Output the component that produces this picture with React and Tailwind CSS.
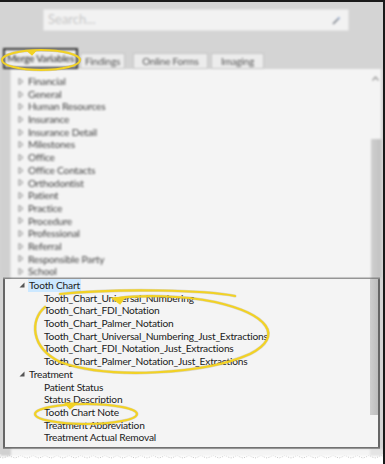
import React from "react";

const topItems = [
  "Financial",
  "General",
  "Human Resources",
  "Insurance",
  "Insurance Detail",
  "Milestones",
  "Office",
  "Office Contacts",
  "Orthodontist",
  "Patient",
  "Practice",
  "Procedure",
  "Professional",
  "Referral",
  "Responsible Party",
  "School",
];

const toothChart = [
  "Tooth_Chart_Universal_Numbering",
  "Tooth_Chart_FDI_Notation",
  "Tooth_Chart_Palmer_Notation",
  "Tooth_Chart_Universal_Numbering_Just_Extractions",
  "Tooth_Chart_FDI_Notation_Just_Extractions",
  "Tooth_Chart_Palmer_Notation_Just_Extractions",
];

const treatment = [
  "Patient Status",
  "Status Description",
  "Tooth Chart Note",
  "Treatment Abbreviation",
  "Treatment Actual Removal",
  "Treatment Description",
];

const Collapsed = () => (
  <svg width="6" height="7" viewBox="0 0 6 7" className="shrink-0">
    <path d="M1 0.5 L5 3.5 L1 6.5 Z" fill="none" stroke="#8a8a8a" strokeWidth="1" />
  </svg>
);

const Expanded = () => (
  <svg width="6" height="6" viewBox="0 0 6 6" className="shrink-0">
    <path d="M5.5 0.5 L5.5 5.5 L0.5 5.5 Z" fill="#555" />
  </svg>
);

// pad = distance from the list's left edge to the expander icon
const Row = ({ children, pad, child, icon, selected }) => (
  <div className="flex items-center h-[12.7px] whitespace-nowrap">
    <div className={pad} />
    {child ? <div className="w-[25px] shrink-0" /> : <div className="w-[10px] shrink-0 flex items-center">{icon}</div>}
    <span className={selected ? "bg-[#cce8ff] px-[1px] -ml-[1px] leading-[12.7px]" : "leading-[12.7px]"}>
      {children}
    </span>
  </div>
);

const Tab = ({ label, w }) => (
  <div
    className={`${w} h-[16px] bg-[#ececec] border border-[#c4c4c4] flex items-center justify-center text-[10px] text-[#555] mr-[3px] whitespace-nowrap`}
  >
    {label}
  </div>
);

export default function App() {
  return (
    <div className="relative w-[385px] h-[464px] overflow-hidden bg-[#d4d4d4] border-t-2 border-r-2 border-[#1a1a1a] font-['Lato','Open_Sans',sans-serif] text-[10.2px] tracking-[-0.2px] text-[#222]">
      {/* blurred upper half */}
      <div className="blur-[0.8px] h-[275px] flex flex-col">
        <div className="pl-[43px] pt-[7px]">
          <div className="w-[306px] h-[22px] bg-[#f2f2f2] border border-[#e2e2e2] flex items-center justify-between pl-[4px] pr-[7px]">
            <span className="text-[13px] tracking-normal text-[#c8c8c8]">Search...</span>
            <svg width="9" height="9" viewBox="0 0 9 9">
              <path d="M1 8 L6 3" stroke="#7a7f8a" strokeWidth="1.6" />
              <path d="M6 3 L7.5 1.5" stroke="#8da3c8" strokeWidth="2" />
            </svg>
          </div>
        </div>
        <div className="flex items-end h-[21px] mt-[17px] pl-[3px]">
          <div className="w-[75px] h-[21px] bg-[#eeeeee] border-2 border-[#333] flex items-center justify-center text-[10px] text-[#222] mr-[2px] whitespace-nowrap">
            Merge Variables
          </div>
          <Tab label="Findings" w="w-[45px]" />
          <div className="w-[5px]" />
          <Tab label="Online Forms" w="w-[75px]" />
          <Tab label="Imaging" w="w-[53px]" />
        </div>
        <div className="h-px bg-[#bcbcbc]" />
        <div className="flex flex-1">
          <div className="w-[11px] bg-[#d0d0d0] border-r border-[#e0e0e0]" />
          <div className="flex-1 bg-[#f4f4f4] pt-[6px] text-[#444]">
            {topItems.map((t) => (
              <Row key={t} pad="w-[7px] shrink-0" icon={<Collapsed />}>
                {t}
              </Row>
            ))}
          </div>
          <div className="w-[11px] bg-[#f4f4f4] flex flex-col items-center">
            <svg width="7" height="5" viewBox="0 0 7 5" className="mt-[7px]">
              <path d="M0.5 4.5 L3.5 1 L6.5 4.5" fill="none" stroke="#999" strokeWidth="1.2" />
            </svg>
            <div className="mt-auto w-[10px] h-[139px] bg-gradient-to-r from-[#cfcfcf] to-[#c2c2c2]" />
          </div>
          <div className="w-[2px] bg-[#d4d4d4]" />
        </div>
      </div>

      {/* highlighted box */}
      <div className="ml-[3px] w-[377px] h-[172px] border-2 border-[#666] bg-[#f4f4f4] flex overflow-hidden">
        <div className="flex-1">
          <Row pad="w-[14px] shrink-0" icon={<Expanded />} selected>
            Tooth Chart
          </Row>
          {toothChart.map((t) => (
            <Row key={t} pad="w-[14px] shrink-0" child>
              {t}
            </Row>
          ))}
          <Row pad="w-[14px] shrink-0" icon={<Expanded />}>
            Treatment
          </Row>
          {treatment.map((t) => (
            <Row key={t} pad="w-[14px] shrink-0" child>
              {t}
            </Row>
          ))}
        </div>
        <div className="w-[8px] flex flex-col">
          <div className="h-[136px] bg-gradient-to-r from-[#cfcfcf] to-[#bdbdbd]" />
        </div>
      </div>

      {/* list continuation under box */}
      <div className="blur-[0.8px] flex h-[7px]">
        <div className="w-[11px] bg-[#d0d0d0]" />
        <div className="flex-1 bg-[#f4f4f4]" />
        <div className="w-[13px] bg-[#e4e4e4]" />
      </div>

      {/* torn edge */}
      <div className="h-[20px] bg-white">
        <svg width="385" height="6" viewBox="0 0 385 6" className="block -mt-[2px]">
          <path
            d={
              "M0 3 " +
              Array.from({ length: 64 })
                .map((_, i) => `L${i * 6 + 3} ${i % 2 ? 1 : 4} L${i * 6 + 6} 3`)
                .join(" ")
            }
            fill="none"
            stroke="#c4c4c4"
            strokeWidth="1"
            strokeDasharray="1 1.5"
          />
        </svg>
      </div>

      {/* yellow annotation marks */}
      <svg
        className="absolute left-0 top-0 pointer-events-none"
        width="385"
        height="464"
        viewBox="0 0 385 464"
      >
        <g fill="none" strokeLinecap="round">
          <ellipse cx="41" cy="58" rx="39" ry="10" stroke="#9a8f5a" strokeWidth="3" opacity="0.3" />
          <ellipse cx="41" cy="58" rx="39" ry="10" stroke="#f2d224" strokeWidth="2" />
          <path d="M27 48.5 L32 53 L36 48.5 Z" stroke="#f2d224" strokeWidth="1.2" fill="#f2d224" />

          <path
            d="M60 292 C120 286 205 288 235 294 M45 305 C30 318 30 345 60 360 C110 378 205 372 250 352 C285 334 268 312 215 300 C180 293 140 293 120 296"
            stroke="#9a8f5a"
            strokeWidth="3.2"
            opacity="0.3"
          />
          <path
            d="M60 292 C120 286 205 288 235 294 M45 305 C30 318 30 345 60 360 C110 378 205 372 250 352 C285 334 268 312 215 300 C180 293 140 293 120 296"
            stroke="#f2d224"
            strokeWidth="2.2"
          />
          <path d="M112 296 L120 302 L125 295 Z" stroke="#f2d224" strokeWidth="1.2" fill="#f2d224" />

          <ellipse cx="86" cy="412" rx="51" ry="10" stroke="#9a8f5a" strokeWidth="3" opacity="0.3" />
          <ellipse cx="86" cy="412" rx="51" ry="10" stroke="#f2d224" strokeWidth="2" />
          <path d="M65 401 L70 407 L77 401 Z" stroke="#f2d224" strokeWidth="1.2" fill="#f2d224" />
        </g>
      </svg>
    </div>
  );
}
